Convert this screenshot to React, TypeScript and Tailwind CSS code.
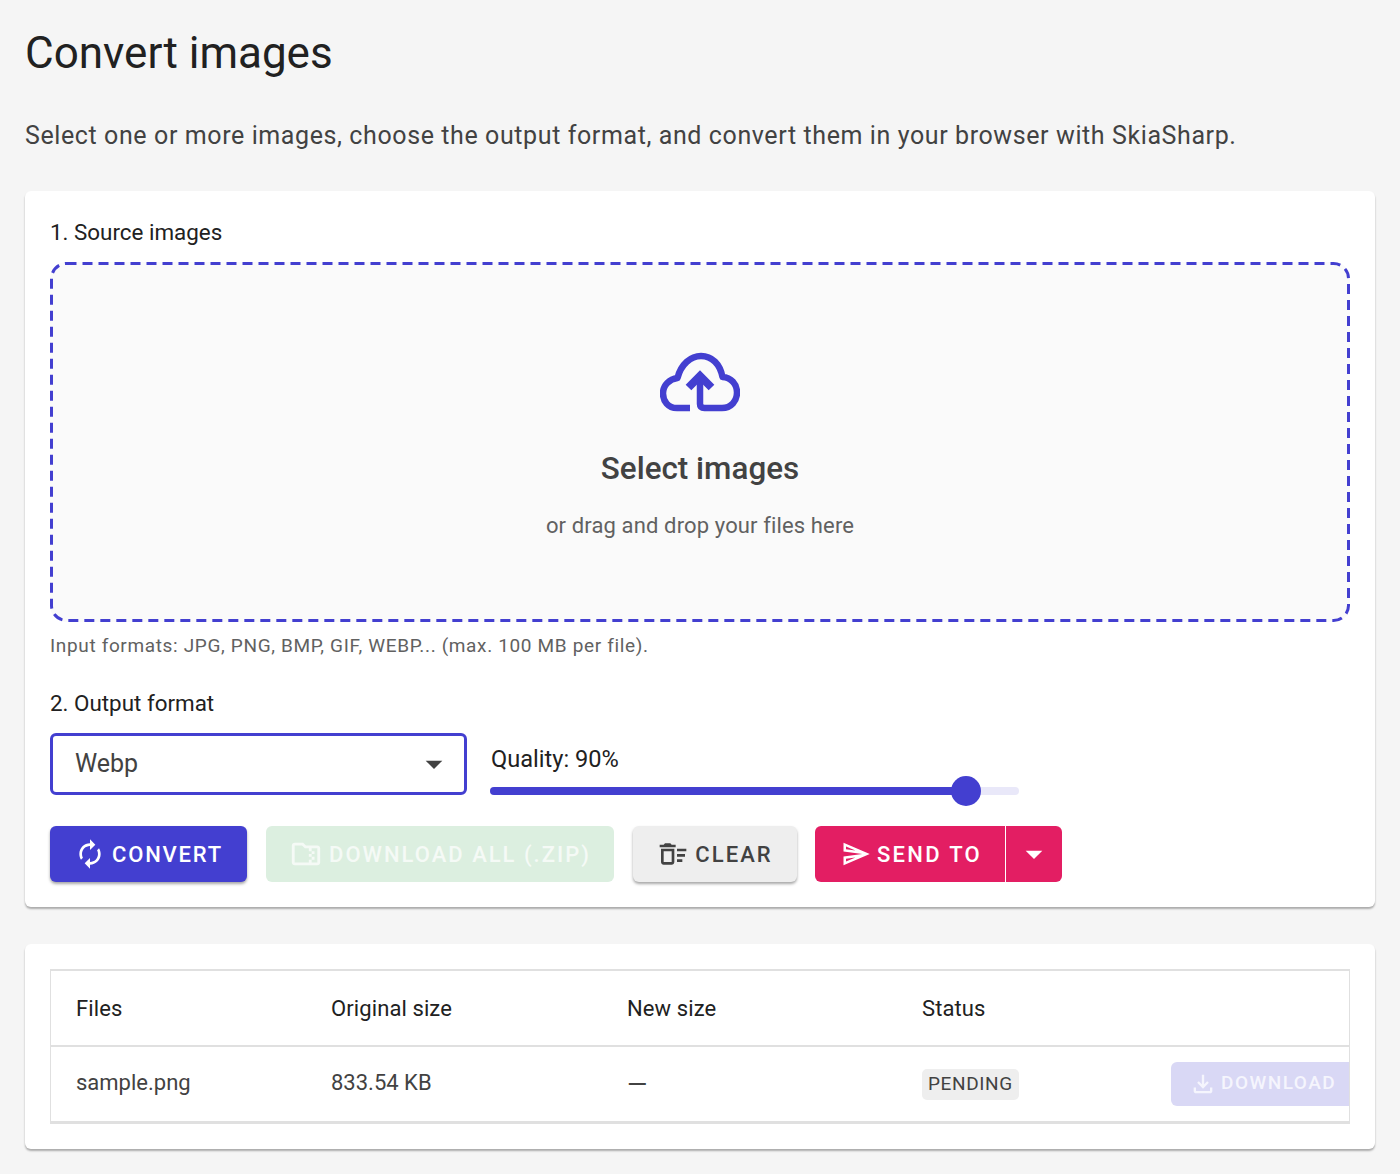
import React from 'react';
import { MdArrowDropDown, MdAutorenew, MdOutlineDeleteSweep, MdOutlineFileDownload, MdOutlineFolderZip, MdOutlineSend } from 'react-icons/md';

const CloudUpload = () => (
  <svg width="80" height="60" viewBox="0 0 80 60" fill="none" stroke="#433fd0" strokeWidth="6.5" strokeLinecap="butt" strokeLinejoin="round">
    <path d="M30 56H17C8 56 3 49 3 41.5C3 33 9.5 27 17.5 26C21 12 31 4 41 4C52 4 60 12 62.5 25C71 25.5 77 32 77 40.5C77 49 71 56 62 56H44.5C41.5 56 40 54.5 40 52V24" />
    <path d="M28.5 35.5L40 24L51.5 35.5" strokeWidth="8" strokeLinejoin="miter" />
  </svg>
);

const DashedFrame = () => (
  <svg className="absolute inset-0" width="1300" height="360" viewBox="0 0 1300 360" fill="none">
    <rect x="1.5" y="1.5" width="1297" height="357" rx="15" stroke="#433fd0" strokeWidth="3" strokeDasharray="10 6" />
  </svg>
);

const App: React.FC = () => {
  return (
    <div className="min-h-[1174px] bg-[#f5f5f5] px-[25px] pt-[24px] font-['Roboto',sans-serif] text-[#212121]">
      <h1 className="text-[44px] leading-[58px] font-normal">Convert images</h1>
      <p className="mt-[36px] text-[25px] leading-[36px] tracking-[0.6px] text-[#424242]">
        Select one or more images, choose the output format, and convert them in your browser with SkiaSharp.
      </p>

      {/* SOURCE + OUTPUT */}
      <div className="mt-[37px] h-[716px] rounded-[6px] bg-white p-[25px] shadow-[0_2px_2px_rgba(0,0,0,0.3)]">
        <h2 className="text-[22.4px] leading-[32px] font-normal">1. Source images</h2>
        <div className="relative mt-[14px] flex h-[360px] flex-col items-center rounded-[16px] bg-[#fafafa] pt-[90px]">
          <DashedFrame />
          <CloudUpload />
          <p className="mt-[37px] text-[31.4px] leading-[40px] font-medium text-[#424242]">Select images</p>
          <p className="mt-[21px] text-[22px] leading-[32px] tracking-[0.13px] text-[#616161]">or drag and drop your files here</p>
        </div>
        <p className="mt-[10px] text-[19px] leading-[28px] tracking-[0.65px] text-[#616161]">
          Input formats: JPG, PNG, BMP, GIF, WEBP... (max. 100 MB per file).
        </p>

        <h2 className="mt-[27px] text-[22.4px] leading-[32px] font-normal">2. Output format</h2>
        <div className="mt-[14px] flex items-start">
          <div className="flex h-[62px] w-[417px] items-center justify-between rounded-[6px] border-[3px] border-[#433fd0] pr-[10px] pl-[22px]">
            <span className="text-[25px] text-[#424242]">Webp</span>
            <MdArrowDropDown size={40} className="text-[#424242]" />
          </div>
          <div className="ml-[23px] w-[529px]">
            <p className="pt-[10px] pl-px text-[23.6px] leading-[32px]">Quality: 90%</p>
            <div className="relative mt-[12px] h-[8px] rounded-full bg-[#e9e8f9]">
              <div className="h-full w-[476px] rounded-full bg-[#433fd0]" />
              <div className="absolute top-[-11px] left-[461px] h-[30px] w-[30px] rounded-full bg-[#433fd0]" />
            </div>
          </div>
        </div>

        <div className="mt-[31px] flex gap-[18px] text-[22px] font-medium tracking-[2.1px]">
          <button className="flex h-[56px] w-[197px] items-center justify-center gap-[6px] rounded-[6px] bg-[#433fd0] tracking-[1.8px] text-white shadow-[0_2px_3px_rgba(0,0,0,0.35)]">
            <MdAutorenew size={32} />
            <span>CONVERT</span>
          </button>
          <button className="ml-px flex h-[56px] w-[348px] items-center justify-center gap-[6px] rounded-[6px] bg-[#dcefe0] tracking-[2px] text-[#f5faf6]">
            <MdOutlineFolderZip size={34} />
            <span>DOWNLOAD ALL (.ZIP)</span>
          </button>
          <button className="ml-px flex h-[56px] w-[164px] items-center justify-center gap-[6px] rounded-[6px] bg-[#eeeeee] text-[#424242] shadow-[0_2px_3px_rgba(0,0,0,0.35)]">
            <MdOutlineDeleteSweep size={32} />
            <span>CLEAR</span>
          </button>
          <div className="flex h-[56px] overflow-hidden rounded-[6px] bg-[#e31e63] text-white">
            <button className="flex w-[191px] items-center justify-center gap-[6px] border-r border-white pl-[3px] tracking-[2.3px]">
              <MdOutlineSend size={30} />
              <span>SEND TO</span>
            </button>
            <button className="flex w-[56px] items-center justify-center">
              <MdArrowDropDown size={40} />
            </button>
          </div>
        </div>
      </div>

      {/* FILES TABLE */}
      <div className="mt-[37px] h-[205px] rounded-[6px] bg-white p-[25px] shadow-[0_2px_2px_rgba(0,0,0,0.3)]">
        <div className="h-[155px] overflow-hidden border-x border-t-2 border-b-[3px] border-[#e0e0e0] text-[22px]">
          <div className="grid h-[76px] grid-cols-[255px_296px_295px_1fr] items-center border-b-2 border-[#e0e0e0] pl-[25px] tracking-[0.1px]">
            <span>Files</span>
            <span>Original size</span>
            <span>New size</span>
            <span>Status</span>
          </div>
          <div className="grid h-[73px] grid-cols-[255px_296px_295px_249px_1fr] items-center pl-[25px] text-[#424242]">
            <span className="pb-[2px]">sample.png</span>
            <span className="pb-[2px]">833.54 KB</span>
            <span className="text-[26px] leading-none">—</span>
            <span className="mt-[2px] w-fit rounded-[5px] bg-[#eeeeee] px-[6px] py-[1px] text-[19px] tracking-[0.6px]">PENDING</span>
            <button className="flex h-[44px] w-[190px] items-center gap-[4px] rounded-l-[6px] bg-[#d9d8f5] pl-[18px] text-[19px] font-medium tracking-[1.5px] text-[#f5f5fd]">
              <MdOutlineFileDownload size={28} />
              <span>DOWNLOAD</span>
            </button>
          </div>
        </div>
      </div>
    </div>
  );
};

export default App;
